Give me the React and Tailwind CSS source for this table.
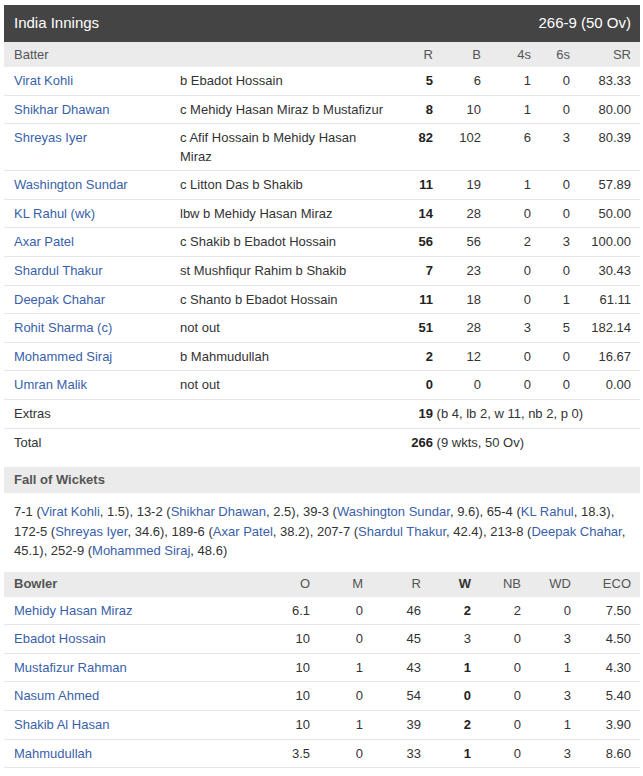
import React from "react";

const batters = [
  { name: "Virat Kohli", how: "b Ebadot Hossain", r: 5, b: 6, f: 1, s: 0, sr: "83.33" },
  { name: "Shikhar Dhawan", how: "c Mehidy Hasan Miraz b Mustafizur", r: 8, b: 10, f: 1, s: 0, sr: "80.00" },
  { name: "Shreyas Iyer", how: "c Afif Hossain b Mehidy Hasan Miraz", r: 82, b: 102, f: 6, s: 3, sr: "80.39" },
  { name: "Washington Sundar", how: "c Litton Das b Shakib", r: 11, b: 19, f: 1, s: 0, sr: "57.89" },
  { name: "KL Rahul (wk)", how: "lbw b Mehidy Hasan Miraz", r: 14, b: 28, f: 0, s: 0, sr: "50.00" },
  { name: "Axar Patel", how: "c Shakib b Ebadot Hossain", r: 56, b: 56, f: 2, s: 3, sr: "100.00" },
  { name: "Shardul Thakur", how: "st Mushfiqur Rahim b Shakib", r: 7, b: 23, f: 0, s: 0, sr: "30.43" },
  { name: "Deepak Chahar", how: "c Shanto b Ebadot Hossain", r: 11, b: 18, f: 0, s: 1, sr: "61.11" },
  { name: "Rohit Sharma (c)", how: "not out", r: 51, b: 28, f: 3, s: 5, sr: "182.14" },
  { name: "Mohammed Siraj", how: "b Mahmudullah", r: 2, b: 12, f: 0, s: 0, sr: "16.67" },
  { name: "Umran Malik", how: "not out", r: 0, b: 0, f: 0, s: 0, sr: "0.00" },
];

// "bold" mirrors the source page, where one wicket figure is not bolded
const bowlers = [
  { name: "Mehidy Hasan Miraz", o: "6.1", m: 0, r: 46, w: 2, nb: 2, wd: 0, eco: "7.50", bold: true },
  { name: "Ebadot Hossain", o: "10", m: 0, r: 45, w: 3, nb: 0, wd: 3, eco: "4.50", bold: false },
  { name: "Mustafizur Rahman", o: "10", m: 1, r: 43, w: 1, nb: 0, wd: 1, eco: "4.30", bold: true },
  { name: "Nasum Ahmed", o: "10", m: 0, r: 54, w: 0, nb: 0, wd: 3, eco: "5.40", bold: true },
  { name: "Shakib Al Hasan", o: "10", m: 1, r: 39, w: 2, nb: 0, wd: 1, eco: "3.90", bold: true },
  { name: "Mahmudullah", o: "3.5", m: 0, r: 33, w: 1, nb: 0, wd: 3, eco: "8.60", bold: true },
];

const link = "text-[#3a5faa]";
const row = "flex items-start pl-[10px] pr-[9px] pt-[5px] pb-[4.2px] leading-[18.4px]";

const Fow = ({ score, name, over, last }) => (
  <>
    {score} (<span className={link}>{name}</span>, {over}){last ? "" : ", "}
  </>
);

const App = () => {
  return (
    <div className="bg-white pt-[5px] pl-[4px] w-[643px] h-[776px] overflow-hidden font-['Liberation_Sans',Arial,sans-serif] text-[13px] text-[#333]">
      <div className="w-[636px]">
        {/* Innings header */}
        <div className="h-[37px] bg-[#444] flex items-center justify-between pl-[10px] pr-[9px] text-[15px] text-white">
          <span>India Innings</span>
          <span>266-9 (50 Ov)</span>
        </div>

        {/* Batter header */}
        <div className="h-[25px] bg-[#ebebeb] flex items-center pl-[10px] pr-[9px] text-[#555]">
          <div className="w-[166px]">Batter</div>
          <div className="w-[215px]"></div>
          <div className="w-[38px] text-right">R</div>
          <div className="w-[48px] text-right">B</div>
          <div className="w-[50px] text-right">4s</div>
          <div className="w-[39px] text-right">6s</div>
          <div className="w-[61px] text-right">SR</div>
        </div>

        {batters.map((p) => (
          <div key={p.name} className={`${row} border-b border-[#e6e6e6]`}>
            <div className={`w-[166px] ${link}`}>{p.name}</div>
            <div className="w-[215px] pr-[8px]">{p.how}</div>
            <div className="w-[38px] text-right font-bold text-[#222]">{p.r}</div>
            <div className="w-[48px] text-right">{p.b}</div>
            <div className="w-[50px] text-right">{p.f}</div>
            <div className="w-[39px] text-right">{p.s}</div>
            <div className="w-[61px] text-right">{p.sr}</div>
          </div>
        ))}

        {/* Extras */}
        <div className={`${row} border-b border-[#e6e6e6]`}>
          <div className="w-[166px]">Extras</div>
          <div className="w-[215px]"></div>
          <div className="w-[38px] text-right font-bold text-[#222]">19</div>
          <div className="whitespace-nowrap">&nbsp;(b 4, lb 2, w 11, nb 2, p 0)</div>
        </div>

        {/* Total */}
        <div className={`${row} pb-[5.2px]`}>
          <div className="w-[166px]">Total</div>
          <div className="w-[215px]"></div>
          <div className="w-[38px] text-right font-bold text-[#222]">266</div>
          <div className="whitespace-nowrap">&nbsp;(9 wkts, 50 Ov)</div>
        </div>

        {/* Fall of wickets */}
        <div className="mt-[10px] h-[26px] bg-[#ebebeb] flex items-center pl-[10px] font-bold text-[#555]">
          Fall of Wickets
        </div>
        <div className="pl-[10px] pt-[9px] pb-[11px] leading-[19.5px]">
          <div className="whitespace-nowrap">
            <Fow score="7-1" name="Virat Kohli" over="1.5" />
            <Fow score="13-2" name="Shikhar Dhawan" over="2.5" />
            <Fow score="39-3" name="Washington Sundar" over="9.6" />
            <Fow score="65-4" name="KL Rahul" over="18.3" />
          </div>
          <div className="whitespace-nowrap">
            <Fow score="172-5" name="Shreyas Iyer" over="34.6" />
            <Fow score="189-6" name="Axar Patel" over="38.2" />
            <Fow score="207-7" name="Shardul Thakur" over="42.4" />
            213-8 (<span className={link}>Deepak Chahar</span>,
          </div>
          <div className="whitespace-nowrap">
            45.1), <Fow score="252-9" name="Mohammed Siraj" over="48.6" last />
          </div>
        </div>

        {/* Bowler header */}
        <div className="h-[25px] bg-[#ebebeb] flex items-center pl-[10px] pr-[9px] text-[#555]">
          <div className="w-[260px] font-bold">Bowler</div>
          <div className="w-[36px] text-right">O</div>
          <div className="w-[53px] text-right">M</div>
          <div className="w-[58px] text-right">R</div>
          <div className="w-[50px] text-right font-bold text-[#333]">W</div>
          <div className="w-[50px] text-right">NB</div>
          <div className="w-[50px] text-right">WD</div>
          <div className="w-[60px] text-right">ECO</div>
        </div>

        {bowlers.map((b) => (
          <div key={b.name} className={`${row} border-b border-[#e6e6e6]`}>
            <div className={`w-[260px] ${link}`}>{b.name}</div>
            <div className="w-[36px] text-right">{b.o}</div>
            <div className="w-[53px] text-right">{b.m}</div>
            <div className="w-[58px] text-right">{b.r}</div>
            <div className={`w-[50px] text-right ${b.bold ? "font-bold text-[#222]" : ""}`}>{b.w}</div>
            <div className="w-[50px] text-right">{b.nb}</div>
            <div className="w-[50px] text-right">{b.wd}</div>
            <div className="w-[60px] text-right">{b.eco}</div>
          </div>
        ))}
      </div>
    </div>
  );
};

export default App;
